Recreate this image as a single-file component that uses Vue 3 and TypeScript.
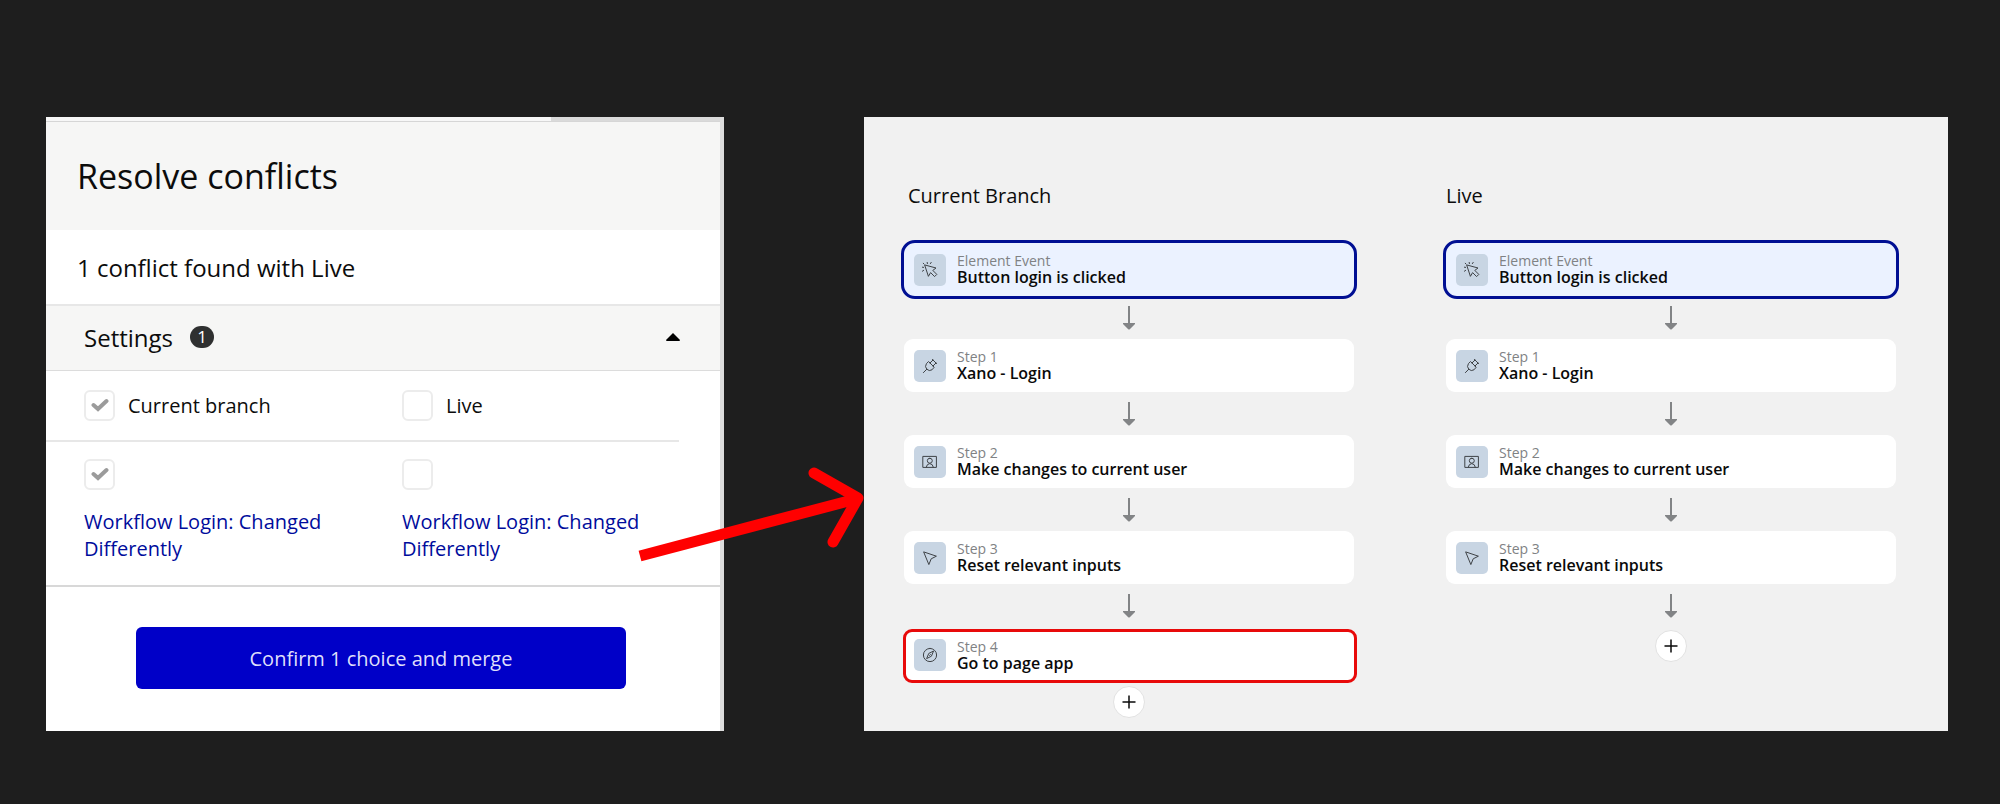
<script setup lang="ts">
import { ref } from 'vue'

type IconName = 'click' | 'plug' | 'user' | 'pointer' | 'compass'

interface Step {
  label: string
  title: string
  icon: IconName
  kind?: 'event' | 'added'
}

interface Flow {
  name: string
  steps: Step[]
}

const shared: Step[] = [
  { label: 'Element Event', title: 'Button login is clicked', icon: 'click', kind: 'event' },
  { label: 'Step 1', title: 'Xano - Login', icon: 'plug' },
  { label: 'Step 2', title: 'Make changes to current user', icon: 'user' },
  { label: 'Step 3', title: 'Reset relevant inputs', icon: 'pointer' },
]

const flows: Flow[] = [
  {
    name: 'Current Branch',
    steps: [...shared, { label: 'Step 4', title: 'Go to page app', icon: 'compass', kind: 'added' }],
  },
  { name: 'Live', steps: shared },
]

const icons: Record<IconName, string[]> = {
  click: [
    'M3 3 L14 6 L10.8 8.4 L14.8 12.4 L12.6 14.6 L8.6 10.6 L6.6 14 Z',
    'M5.4 1.6 L5.2 0.4 M8.4 1.6 L9.2 0.4 M1.6 5.4 L0.4 5.2 M1.6 8.4 L0.4 9.2 M2 2 L1.2 1.2',
  ],
  plug: [
    'M6.8 3.8 L12.2 9.2 L10 11.8 Q7.2 13.6 4.8 11.2 Q2.4 8.8 4.2 6 Z',
    'M1.4 14.6 L4.8 11.2 M8 5 L11 2 M11 8 L14 5 M10.4 1.4 L14.6 5.6',
  ],
  user: [
    'M1.2 2.4 H14.4 V13.4 H1.2 Z',
    'M7.8 4.2 A2.5 2.5 0 1 1 7.8 9.2 A2.5 2.5 0 1 1 7.8 4.2',
    'M4.2 13.2 Q4.8 9.8 7.8 9.6 Q10.8 9.8 11.4 13.2',
  ],
  pointer: ['M2 2 L14.4 6.2 L9.2 8.8 L7 14.2 Z'],
  compass: [
    'M8 1.4 A6.6 6.6 0 1 1 8 14.6 A6.6 6.6 0 1 1 8 1.4',
    'M11.4 4.4 L9.4 9.2 L4.6 11.6 L6.6 6.8 Z M7.6 8.4 L8.4 7.6',
  ],
}

const allCurrent = ref(true)
const allLive = ref(false)
const pickCurrent = ref(true)
const pickLive = ref(false)
const open = ref(true)
</script>

<template>
  <main class="page">
    <section class="dialog">
      <div class="strip"></div>
      <header class="head"><h1>Resolve conflicts</h1></header>
      <p class="notice">1 conflict found with Live</p>
      <button class="section" type="button" :aria-expanded="open" @click="open = !open">
        <span>Settings</span>
        <span class="count">1</span>
        <svg class="caret" viewBox="0 0 14 8"><path d="M7 0 L14 7 Q14 8 13 8 H1 Q0 8 0 7 Z" /></svg>
      </button>
      <div v-if="open" class="choices">
        <div class="row all">
          <label class="pick">
            <span class="box">
              <input v-model="allCurrent" type="checkbox" />
              <svg v-if="allCurrent" viewBox="0 0 18 14"><path d="M2.5 7 L7 11 L15.5 3" /></svg>
            </span>
            Current branch
          </label>
          <label class="pick">
            <span class="box">
              <input v-model="allLive" type="checkbox" />
              <svg v-if="allLive" viewBox="0 0 18 14"><path d="M2.5 7 L7 11 L15.5 3" /></svg>
            </span>
            Live
          </label>
        </div>
        <div class="row each">
          <div>
            <span class="box">
              <input v-model="pickCurrent" type="checkbox" aria-labelledby="change-current" />
              <svg v-if="pickCurrent" viewBox="0 0 18 14"><path d="M2.5 7 L7 11 L15.5 3" /></svg>
            </span>
            <a id="change-current" href="#current">Workflow Login: Changed Differently</a>
          </div>
          <div>
            <span class="box">
              <input v-model="pickLive" type="checkbox" aria-labelledby="change-live" />
              <svg v-if="pickLive" viewBox="0 0 18 14"><path d="M2.5 7 L7 11 L15.5 3" /></svg>
            </span>
            <a id="change-live" href="#live">Workflow Login: Changed Differently</a>
          </div>
        </div>
      </div>
      <footer class="foot">
        <button class="confirm" type="button">Confirm 1 choice and merge</button>
      </footer>
      <svg class="callout" viewBox="0 0 230 100" aria-hidden="true">
        <path d="M6 92 L222 35" />
        <path class="barbs" d="M180 9 L224 34 L199 78" />
      </svg>
    </section>

    <section class="canvas">
      <div v-for="flow in flows" :key="flow.name" class="flow">
        <h2>{{ flow.name }}</h2>
        <template v-for="(step, i) in flow.steps" :key="step.label">
          <article class="card" :class="step.kind">
            <span class="tile">
              <svg viewBox="0 0 16 16"><path v-for="d in icons[step.icon]" :key="d" :d="d" /></svg>
            </span>
            <div>
              <p class="label">{{ step.label }}</p>
              <p class="title">{{ step.title }}</p>
            </div>
          </article>
          <svg
            v-if="step.kind !== 'added'"
            class="down"
            :class="{ first: i === 0 }"
            viewBox="0 0 12 24"
          >
            <path d="M5 0 H7 V17 H12 V18 L7 23 Q6 24 5 23 L0 18 V17 H5 Z" />
          </svg>
        </template>
        <button class="add" type="button" aria-label="Add step">
          <svg viewBox="0 0 14 14"><path d="M7 0.5 V13.5 M0.5 7 H13.5" /></svg>
        </button>
      </div>
    </section>
  </main>
</template>

<style>
body {
  margin: 0;
  background: #1e1e1e;
}
</style>

<style scoped>
.page {
  box-sizing: border-box;
  min-height: 100vh;
  padding: 117px 52px 73px 46px;
  display: grid;
  grid-template-columns: 678fr 1084fr;
  gap: 140px;
  background: #1e1e1e;
  color: #0c0c0c;
  font-family: 'Open Sans', 'Noto Sans', sans-serif;
}
h1, h2, p {
  margin: 0;
  font-weight: 400;
}
button, input {
  font: inherit;
  color: inherit;
  margin: 0;
}
.dialog {
  position: relative;
  display: flex;
  flex-direction: column;
  background: #fff;
  border-right: 4px solid #dddddd;
}
.strip {
  height: 4px;
  background: linear-gradient(to right, #f7f7f7 75%, #dadada 75%);
  border-bottom: 1px solid #d6d6d6;
}
.head {
  height: 108px;
  padding-left: 31px;
  display: flex;
  align-items: center;
  background: #f6f6f5;
}
h1 {
  font-size: 34px;
  line-height: 46px;
}
.notice {
  padding: 20px 31px 19px;
  font-size: 24px;
  line-height: 35px;
}
.section {
  display: flex;
  align-items: center;
  gap: 17px;
  height: 67px;
  padding: 0 40px 2px 38px;
  border: 0;
  border-top: 2px solid #e7e7e7;
  border-bottom: 1px solid #dcdcdc;
  background: #f6f6f5;
  font-size: 24px;
  text-align: left;
}
.count {
  width: 24px;
  height: 22px;
  border-radius: 11px;
  background: #2f3030;
  color: #fff;
  font-size: 17px;
  line-height: 22px;
  text-align: center;
}
.caret {
  width: 14px;
  height: 8px;
  margin-left: auto;
}
.row {
  display: grid;
  grid-template-columns: 318fr 277fr;
  padding-left: 38px;
  margin-right: 41px;
}
.all {
  height: 69px;
  align-items: center;
  border-bottom: 2px solid #e7e7e7;
}
.choices {
  border-bottom: 2px solid #d8d8d8;
}
.pick {
  display: flex;
  align-items: center;
  gap: 13px;
  font-size: 20px;
}
.box {
  display: grid;
  width: 31px;
  height: 31px;
}
.box > * {
  grid-area: 1 / 1;
}
.box input {
  appearance: none;
  box-sizing: border-box;
  width: 31px;
  height: 31px;
  border: 2px solid #ececec;
  border-radius: 6px;
  background: #fff;
}
.box svg {
  place-self: center;
  width: 18px;
  height: 14px;
  margin-bottom: 2px;
  fill: none;
  stroke: #9b9b9b;
  stroke-width: 4;
  stroke-linecap: round;
  pointer-events: none;
}
.each {
  padding-top: 17px;
  padding-bottom: 23px;
}
.each a {
  display: block;
  width: 250px;
  margin-top: 18px;
  font-size: 20px;
  line-height: 27px;
  color: #000c9c;
  text-decoration: none;
}
.foot {
  flex: 1;
  padding-top: 40px;
  padding-right: 4px;
  text-align: center;
}
.confirm {
  width: 73%;
  height: 62px;
  border: 0;
  border-radius: 6px;
  background: #0000c8;
  color: #dfdffa;
  font-size: 20px;
}
.callout {
  position: absolute;
  right: -144px;
  top: 347px;
  width: 230px;
  height: 100px;
  fill: none;
  stroke: #ff0000;
  stroke-width: 11;
  pointer-events: none;
}
.barbs {
  stroke-linecap: round;
  stroke-linejoin: round;
}
.canvas {
  display: grid;
  grid-template-columns: 1fr 1fr;
  background: #f1f1f1;
}
.flow {
  display: flex;
  flex-direction: column;
  align-items: center;
  padding: 65px 52px 12px 40px;
}
h2 {
  align-self: stretch;
  margin-bottom: 30px;
  font-size: 20px;
  line-height: 28px;
}
.flow:first-child h2 {
  padding-left: 4px;
}
.card {
  box-sizing: border-box;
  align-self: stretch;
  display: flex;
  align-items: center;
  gap: 11px;
  height: 53px;
  padding: 0 10px;
  border-radius: 9px;
  background: #fff;
}
.event {
  height: 59px;
  margin: 0 -3px;
  border: 3px solid #000f93;
  border-radius: 14px;
  background: #ebf2ff;
}
.added {
  height: 54px;
  margin: 2px -3px 0 -1px;
  padding: 0 8px 2px;
  border: 3px solid #e80a0a;
}
.tile {
  display: grid;
  place-items: center;
  width: 32px;
  height: 32px;
  border-radius: 5px;
  background: #c8d5e3;
}
.tile svg {
  width: 16px;
  height: 16px;
  fill: none;
  stroke: #3f4347;
  stroke-width: 1;
  stroke-linejoin: round;
  stroke-linecap: round;
}
.label {
  font-size: 14px;
  line-height: 16px;
  font-weight: 400;
  color: #808284;
}
.title {
  font-size: 16px;
  line-height: 17px;
  font-weight: 600;
  color: #0a0a0a;
}
.down {
  width: 12px;
  height: 24px;
  margin: 10px 0 9px;
  fill: #828486;
}
.first {
  margin: 7px 0 9px;
}
.add {
  display: grid;
  place-items: center;
  width: 32px;
  height: 32px;
  margin-top: 3px;
  padding: 0;
  border: 1px solid #e2e2e2;
  border-radius: 50%;
  background: #fff;
}
.add svg {
  width: 14px;
  height: 14px;
  stroke: #0a0a0a;
  stroke-width: 1.5;
}
</style>
